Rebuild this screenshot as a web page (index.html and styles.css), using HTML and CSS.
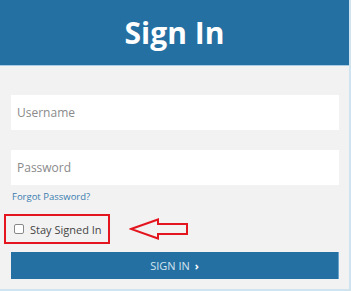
FILE: index.html
```html
<!DOCTYPE html>
<html>
<head>
<meta charset="utf-8">
<link rel="stylesheet" href="styles.css">
</head>
<body>
<div class="card">
  <div class="header">Sign In</div>
  <div class="form">
    <div class="field">Username</div>
    <div class="field field-second">Password</div>
    <a class="forgot">Forgot Password?</a>
    <div class="stay-row">
      <label class="stay"><span class="box"></span>Stay Signed In</label>
      <svg class="arrow" width="62" height="24" viewBox="0 0 62 24">
        <path d="M2 12 L29 2.5 L29 7 L58 7 L58 17 L29 17 L29 21.5 Z" fill="none" stroke="#e3151e" stroke-width="2" stroke-linejoin="miter"/>
      </svg>
    </div>
    <div class="button">SIGN IN <span class="chev">›</span></div>
  </div>
</div>
</body>
</html>
```

FILE: styles.css
```css
html, body {
  margin: 0;
  padding: 0;
  background: #f2f2f2;
}
body {
  font-family: "Open Sans", "Liberation Sans", sans-serif;
  width: 351px;
  height: 291px;
  overflow: hidden;
}
.card {
  width: 349px;
  height: 289px;
  border-right: 2px solid #d0e4f0;
  border-bottom: 2px solid #d0e4f0;
  background: #f2f2f2;
}
.header {
  height: 65px;
  line-height: 65px;
  background: #2470a3;
  color: #fff;
  font-size: 30px;
  font-weight: 700;
  text-align: center;
  border-bottom: 1px solid #a9cce4;
}
.form {
  display: flex;
  flex-direction: column;
  padding: 29px 10px 0 11px;
}
.field {
  height: 35px;
  background: #fff;
  color: #8a8a8a;
  font-size: 12px;
  line-height: 35px;
  padding-left: 6px;
}
.field-second {
  margin-top: 20px;
}
.forgot {
  margin-top: 5px;
  font-size: 9.5px;
  color: #3a7db0;
  line-height: 14px;
  padding-left: 1px;
}
.stay-row {
  position: relative;
  margin-top: 10px;
  height: 30px;
}
.stay {
  position: absolute;
  left: -7px;
  top: 0;
  width: 102px;
  height: 26px;
  border: 2px solid #e3151e;
  display: flex;
  align-items: center;
  font-size: 11px;
  white-space: nowrap;
  color: #444;
}
.box {
  width: 8px;
  height: 8px;
  border: 1px solid #888;
  border-radius: 2px;
  background: #fff;
  margin: 0 6px 0 8px;
}
.arrow {
  position: absolute;
  left: 118px;
  top: 3px;
}
.button {
  margin-top: 8px;
  height: 27px;
  background: #2470a3;
  border-right: 1px solid #6aa3cb;
  color: #d4e4f0;
  font-size: 11px;
  line-height: 27px;
  text-align: center;
}
.chev {
  font-weight: 700;
  color: #fff;
  margin-left: 2px;
}
```
